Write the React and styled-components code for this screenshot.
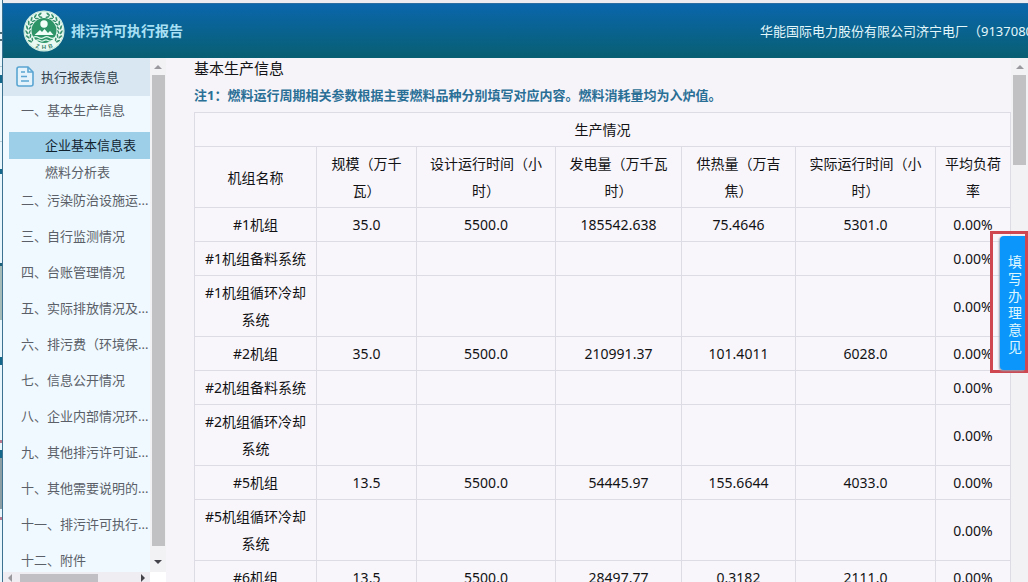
import React from "react";
import styled, { createGlobalStyle } from "styled-components";

const Global = createGlobalStyle`
  * { box-sizing: border-box; }
  html, body, #root { height: 100%; }
  body {
    margin: 0;
    overflow: hidden;
    font-family: "Noto Sans", "Noto Sans CJK SC", sans-serif;
    color: #121214;
    background: #f4f3f7;
  }
`;

const Page = styled.div`
  display: flex;
  height: 100vh;
  overflow: hidden;
`;

const Edge = styled.div`
  flex: none;
  width: 3px;
  border-right: 1px solid #3d7290;
  background: linear-gradient(
    #e9f6fb 0 32px, #4b6a78 32px 34px, #e9f6fb 34px 39px, #4b6a78 39px 41px,
    #e9f6fb 41px 66px, #b9ccd4 66px 67px, #e9f6fb 67px 75px, #16688a 75px 83px,
    #e9f6fb 83px 141px, #b9ccd4 141px 142px, #e9f6fb 142px 169px, #16688a 169px 174px,
    #e9f6fb 174px 263px, #1d6079 263px 266px, #a5bcb8 266px 320px, #e9f6fb 320px 357px,
    #16688a 357px 365px, #e9f6fb 365px 440px, #b9788d 440px 443px, #e9f6fb 443px 450px,
    #16688a 450px 458px, #8b9fa4 458px 509px, #e9f6fb 509px 517px, #b9788d 517px 520px, #e9f6fb 520px
  );
`;

const Frame = styled.div`
  flex: 1;
  min-width: 0;
  display: flex;
  flex-direction: column;
  border-top: 3px solid #ecebf0;
`;

const Header = styled.header`
  flex: none;
  height: 55px;
  display: flex;
  align-items: center;
  padding-left: 20px;
  gap: 6px;
  overflow: hidden;
  color: #e4f7fb;
  border-top: 1px solid #2a6da3;
  background: linear-gradient(#0a66ac, #085f72);
`;

const AppTitle = styled.h1`
  flex: 1;
  margin: 0;
  font-size: 14px;
  line-height: 20px;
  font-weight: 700;
  color: #a9e0f5;
  white-space: nowrap;
`;

const Company = styled.div`
  flex: none;
  width: 268px;
  font-size: 13px;
  line-height: 20px;
  white-space: nowrap;
`;

const Body = styled.div`
  flex: 1;
  min-height: 0;
  display: flex;
`;

const Sidebar = styled.aside`
  flex: none;
  width: 147px;
  display: flex;
  flex-direction: column;
  background: #f0f9ff;
`;

const SideHead = styled.div`
  flex: none;
  height: 38px;
  display: flex;
  align-items: center;
  gap: 6px;
  padding: 0 0 2px 13px;
  font-size: 13px;
  color: #33414c;
  background: #d9e7f2;
`;

const Nav = styled.nav`
  flex: 1;
  min-height: 0;
  overflow: hidden;
  font-size: 13px;
`;

const NavItem = styled.a`
  display: block;
  height: 36px;
  padding-left: 18px;
  line-height: 28px;
  color: #5a5f68;
  text-decoration: none;
  white-space: nowrap;
`;

const SubItem = styled.a`
  display: block;
  height: 27px;
  margin-left: 6px;
  padding-left: 36px;
  line-height: 26px;
  color: ${(p) => (p.$active ? "#10222e" : "#5a5f68")};
  background: ${(p) => (p.$active ? "#9dcfe9" : "transparent")};
  text-decoration: none;
  white-space: nowrap;
`;

const HBar = styled.div`
  flex: none;
  height: 10px;
  display: flex;
  align-items: stretch;
  padding: 2px 5px 0;
  background: #f0edf2;
`;

const HThumb = styled.div`
  width: 78px;
  margin: 0 auto 0 8px;
  background: #c1bfc4;
`;

const VBar = styled.div`
  flex: none;
  width: ${(p) => p.$width}px;
  display: flex;
  flex-direction: column;
  align-items: center;
  padding-top: 7px;
  background: #f2f1f4;
`;

const VThumb = styled.div`
  width: 13px;
  height: ${(p) => p.$height};
  margin: 5px 0 14px;
  background: #c1c0c3;
`;

const Corner = styled.div`
  width: 100%;
  height: 10px;
  margin-top: auto;
  background: #fff;
`;

const Main = styled.main`
  flex: 1;
  min-width: 0;
  padding-left: 28px;
  overflow: hidden;
  background: #f6f4f8;
`;

const Heading = styled.h2`
  margin: 0;
  font-size: 15px;
  line-height: 20px;
  font-weight: 400;
`;

const Note = styled.p`
  margin: 0;
  padding: 7px 0;
  font-size: 13px;
  line-height: 20px;
  font-weight: 700;
  color: #2a6f96;
  white-space: nowrap;
`;

const Table = styled.table`
  width: 100%;
  table-layout: fixed;
  border-collapse: collapse;
  font-size: 14px;
  line-height: 27px;
  background: #f8f6fb;
`;

const Cell = styled.td`
  height: 34px;
  padding: 3px 6px;
  border: 1px solid #dddce4;
  text-align: center;
  font-weight: 400;
`;

const Callout = styled.div`
  position: absolute;
  top: 231px;
  right: 0;
  width: 38px;
  height: 142px;
  padding: 2px 0 0 7px;
  border: 3px solid #cf4750;
`;

const OpinionButton = styled.button`
  display: block;
  width: 25px;
  height: 134px;
  padding: 2px 3px 0 8px;
  border: 0;
  border-radius: 4px 0 0 4px;
  font-family: inherit;
  font-size: 14px;
  line-height: 17px;
  color: #dff6ff;
  background: #0a96fb;
  box-shadow: -1px 1px 2px #8fa3b5;
`;

const Arrow = ({ d, w = 8, h = 5, color = "#9a999e" }) => (
  <svg width={w} height={h} viewBox={`0 0 ${w} ${h}`}>
    <path d={d} fill={color} />
  </svg>
);

const leafAngles = [14, 30, 46, 62, 78, 94, 110, 126];

const Branch = () => (
  <g fill="#36906d">
    {leafAngles.map((a) => (
      <g key={a} transform={`rotate(${a} 21 21)`}>
        <ellipse cx="21" cy="3.700" rx="2.300" ry=".9" transform="rotate(28 21 3.700)" />
        <ellipse cx="21" cy="6.600" rx="2.100" ry=".8" transform="rotate(-28 21 6.600)" />
      </g>
    ))}
  </g>
);

const Emblem = () => (
  <svg width="42" height="42" viewBox="0 0 42 42" aria-hidden="true">
    <circle cx="21" cy="21" r="20.5" fill="#eafaf3" />
    <circle cx="21" cy="21" r="19.6" fill="none" stroke="#a5d8c5" strokeWidth=".6" />
    <Branch />
    <g transform="matrix(-1 0 0 1 42 0)"><Branch /></g>
    <circle cx="21" cy="20.500" r="12.500" fill="#2d9467" />
    <circle cx="21" cy="14" r="3.700" fill="#f2fff9" />
    <path d="M11.500 25l5.500-5 2 2 2.500-3 3.500 4 2-2 3.500 4z" fill="#f2fff9" />
    <path d="M10 27.500q2.700-1.800 5.500 0t5.500 0 5.500 0 5.500 0M13 30.500q2-1.400 4 0t4 0 4 0 4 0" fill="none" stroke="#dff8ec" strokeWidth="1.200" />
    <g fontSize="6" fontWeight="700" fontFamily="Liberation Sans, sans-serif" fill="#36806a" textAnchor="middle">
      <text x="14" y="38" transform="rotate(18 14 38)">Z</text>
      <text x="21" y="39">H</text>
      <text x="28" y="38" transform="rotate(-18 28 38)">B</text>
    </g>
  </svg>
);

const DocIcon = () => (
  <svg width="19" height="21" viewBox="0 0 19 21" fill="none" stroke="#5aa5d2" strokeWidth="1.600" aria-hidden="true">
    <path d="M3 1h9l5 5v12q0 2-2 2H3q-2 0-2-2V3q0-2 2-2z" fill="#e3f2fb" />
    <path d="M12 1v5h5M5 6h4M5 10.500h6M5 15h8" />
  </svg>
);

const sections = [
  "二、污染防治设施运...", "三、自行监测情况", "四、台账管理情况", "五、实际排放情况及...",
  "六、排污费（环境保...", "七、信息公开情况", "八、企业内部情况环...", "九、其他排污许可证...",
  "十、其他需要说明的...", "十一、排污许可执行...", "十二、附件",
];

const columns = [
  ["机组名称", 122], ["规模（万千瓦）", 100], ["设计运行时间（小时）", 139], ["发电量（万千瓦时）", 126],
  ["供热量（万吉焦）", 114], ["实际运行时间（小时）", 140], ["平均负荷率", 75],
];

const rows = [
  ["#1机组", "35.0", "5500.0", "185542.638", "75.4646", "5301.0", "0.00%"],
  ["#1机组备料系统", "", "", "", "", "", "0.00%"],
  ["#1机组循环冷却系统", "", "", "", "", "", "0.00%"],
  ["#2机组", "35.0", "5500.0", "210991.37", "101.4011", "6028.0", "0.00%"],
  ["#2机组备料系统", "", "", "", "", "", "0.00%"],
  ["#2机组循环冷却系统", "", "", "", "", "", "0.00%"],
  ["#5机组", "13.5", "5500.0", "54445.97", "155.6644", "4033.0", "0.00%"],
  ["#5机组循环冷却系统", "", "", "", "", "", "0.00%"],
  ["#6机组", "13.5", "5500.0", "28497.77", "0.3182", "2111.0", "0.00%"],
];

export default function App() {
  return (
    <Page>
      <Global />
      <Edge />
      <Frame>
        <Header>
          <Emblem />
          <AppTitle>排污许可执行报告</AppTitle>
          <Company>华能国际电力股份有限公司济宁电厂（9137080</Company>
        </Header>
        <Body>
          <Sidebar>
            <SideHead><DocIcon />执行报表信息</SideHead>
            <Nav>
              <NavItem href="#basic">一、基本生产信息</NavItem>
              <SubItem href="#company" $active>企业基本信息表</SubItem>
              <SubItem href="#fuel">燃料分析表</SubItem>
              {sections.map((s) => <NavItem href="#section" key={s}>{s}</NavItem>)}
            </Nav>
            <HBar>
              <Arrow w={4} h={8} d="M4 0v8L0 4z" />
              <HThumb />
              <Arrow w={4} h={8} d="M0 0v8l4-4z" color="#45444a" />
            </HBar>
          </Sidebar>
          <VBar $width={16}>
            <Arrow d="M0 4l4-4 4 4z" />
            <VThumb $height="calc(100% - 46px)" />
            <Arrow d="M0 0h8L4 4z" color="#45444a" />
            <Corner />
          </VBar>
          <Main>
            <Heading>基本生产信息</Heading>
            <Note>注1：燃料运行周期相关参数根据主要燃料品种分别填写对应内容。燃料消耗量均为入炉值。</Note>
            <Table>
              <colgroup>
                {columns.map(([name, w]) => <col key={name} style={{ width: `${(w / 816) * 100}%` }} />)}
              </colgroup>
              <thead>
                <tr><Cell as="th" colSpan={7}>生产情况</Cell></tr>
                <tr>{columns.map(([name]) => <Cell as="th" scope="col" key={name}>{name}</Cell>)}</tr>
              </thead>
              <tbody>
                {rows.map((r) => (
                  <tr key={r[0]}>{r.map((v, i) => <Cell key={i}>{v}</Cell>)}</tr>
                ))}
              </tbody>
            </Table>
          </Main>
          <VBar $width={17}>
            <Arrow d="M0 4l4-4 4 4z" />
            <VThumb $height="90px" />
          </VBar>
        </Body>
      </Frame>
      <Callout><OpinionButton type="button">填写办理意见</OpinionButton></Callout>
    </Page>
  );
}
